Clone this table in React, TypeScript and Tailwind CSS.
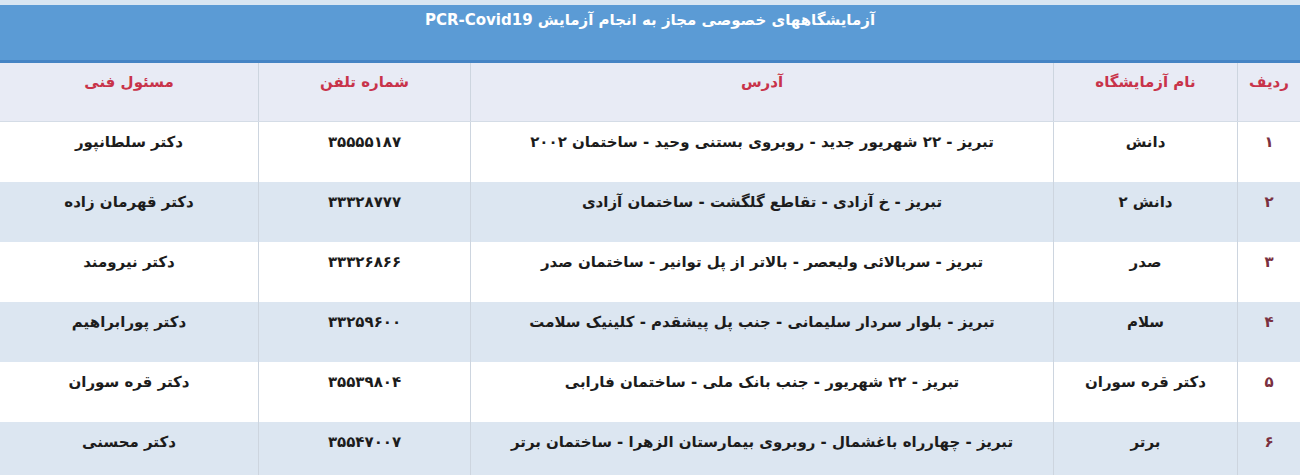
import React from "react";

const rows = [
  ["۱", "دانش", "تبریز - ۲۲ شهریور جدید - روبروی بستنی وحید - ساختمان ۲۰۰۲", "۳۵۵۵۵۱۸۷", "دکتر سلطانپور"],
  ["۲", "دانش ۲", "تبریز - خ آزادی - تقاطع گلگشت - ساختمان آزادی", "۳۳۳۲۸۷۷۷", "دکتر قهرمان زاده"],
  ["۳", "صدر", "تبریز - سربالائی ولیعصر - بالاتر از پل توانیر - ساختمان صدر", "۳۳۳۲۶۸۶۶", "دکتر نیرومند"],
  ["۴", "سلام", "تبریز - بلوار سردار سلیمانی - جنب پل پیشقدم - کلینیک سلامت", "۳۳۲۵۹۶۰۰", "دکتر پورابراهیم"],
  ["۵", "دکتر قره سوران", "تبریز - ۲۲ شهریور - جنب بانک ملی - ساختمان فارابی", "۳۵۵۳۹۸۰۴", "دکتر قره سوران"],
  ["۶", "برتر", "تبریز - چهارراه باغشمال - روبروی بیمارستان الزهرا - ساختمان برتر", "۳۵۵۴۷۰۰۷", "دکتر محسنی"],
];

const headers = ["ردیف", "نام آزمایشگاه", "آدرس", "شماره تلفن", "مسئول فنی"];

export default function App() {
  return (
    <div
      dir="rtl"
      className="w-[1300px] h-[475px] overflow-hidden bg-white"
      style={{ fontFamily: '"DejaVu Sans", "Noto Sans", sans-serif' }}
    >
      <div className="h-[5px] bg-[#d9e6f2]" />
      <div className="h-[58px] bg-[#5b9bd5] border-b-[3px] border-[#4584c4] pt-[5px] text-center text-white font-bold text-[15px] leading-[20px]">
        آزمایشگاههای خصوصی مجاز به انجام آزمایش PCR-Covid19
      </div>
      <div className="grid grid-cols-[63px_184px_583px_212px_258px] h-[59px] bg-[#e8ebf5] border-b border-[#d4dce6]">
        {headers.map((h, i) => (
          <div
            key={i}
            className={`pt-[9px] text-center font-bold text-[15px] leading-[20px] text-[#c8334a] ${
              i < 4 ? "border-l border-[#cdd5df]" : ""
            }`}
          >
            {h}
          </div>
        ))}
      </div>
      {rows.map((r, ri) => (
        <div
          key={ri}
          className={`grid grid-cols-[63px_184px_583px_212px_258px] h-[60px] ${
            ri % 2 === 1 ? "bg-[#dce6f1]" : "bg-white"
          }`}
        >
          {r.map((c, ci) => (
            <div
              key={ci}
              className={`pt-[10px] text-center font-bold text-[15px] leading-[20px] ${
                ci === 0 ? "text-[#7a3040]" : "text-[#1c1c1c]"
              } ${ci < 4 ? "border-l border-[#cdd5df]" : ""}`}
            >
              {c}
            </div>
          ))}
        </div>
      ))}
    </div>
  );
}
